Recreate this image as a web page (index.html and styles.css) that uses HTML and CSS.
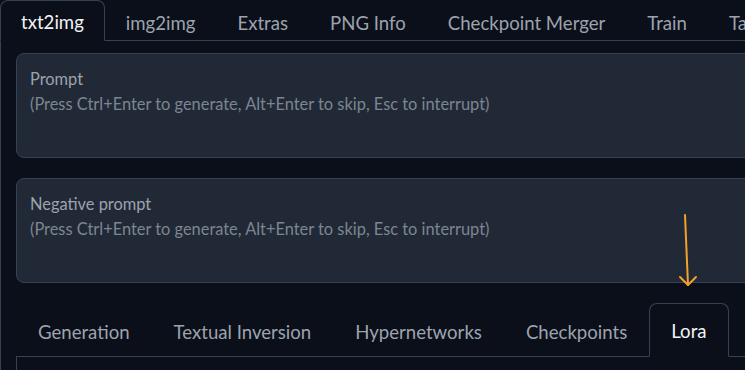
FILE: index.html
```html
<!DOCTYPE html>
<html lang="en">
<head>
  <meta charset="UTF-8">
  <title>Stable Diffusion</title>
  <link rel="stylesheet" href="styles.css">
</head>
<body>
  <div class="app">
    <div class="tab-nav">
      <button class="tab selected">txt2img</button>
      <button class="tab">img2img</button>
      <button class="tab">Extras</button>
      <button class="tab">PNG Info</button>
      <button class="tab">Checkpoint Merger</button>
      <button class="tab">Train</button>
      <button class="tab">Tags</button>
    </div>

    <div class="tab-panel">
      <div class="prompt-block">
        <label class="prompt-label">Prompt</label>
        <textarea class="prompt-input" placeholder="(Press Ctrl+Enter to generate, Alt+Enter to skip, Esc to interrupt)"></textarea>
      </div>

      <div class="prompt-block">
        <label class="prompt-label">Negative prompt</label>
        <textarea class="prompt-input" placeholder="(Press Ctrl+Enter to generate, Alt+Enter to skip, Esc to interrupt)"></textarea>
      </div>

      <div class="extra-networks">
        <div class="tab-nav sub">
          <button class="tab">Generation</button>
          <button class="tab">Textual Inversion</button>
          <button class="tab">Hypernetworks</button>
          <button class="tab">Checkpoints</button>
          <button class="tab selected">Lora</button>
        </div>
        <div class="sub-panel"></div>
      </div>
    </div>

    <!-- annotation arrow pointing at the Lora tab -->
    <svg class="pointer" width="30" height="80" viewBox="0 0 30 80">
      <path d="M11 1 L14 71" stroke="#f2a22a" stroke-width="2" fill="none" stroke-linecap="round"/>
      <path d="M6 63 L14 71 L22 63" stroke="#f2a22a" stroke-width="2" fill="none" stroke-linecap="round" stroke-linejoin="round"/>
    </svg>
  </div>
</body>
</html>
```

FILE: styles.css
```css
:root {
  --bg: #0b0f19;
  --block-bg: #212936;
  --border: #374151;
  --text: #f3f4f6;
  --text-muted: #9ca3af;
  --placeholder: #7d8592;
}

* {
  box-sizing: border-box;
  margin: 0;
  padding: 0;
}

body {
  background: var(--bg);
  font-family: 'Lato', sans-serif;
  overflow: hidden;
}

.app {
  width: 1000px;
  height: 370px;
  position: relative;
}

.tab-nav {
  display: flex;
  border-bottom: 1px solid var(--border);
}

.tab {
  background: none;
  border: 1px solid transparent;
  border-bottom: none;
  border-radius: 8px 8px 0 0;
  color: var(--text-muted);
  font-family: inherit;
  font-size: 18.6px;
  line-height: 22px;
  padding: 10px 20px 7px 20px;
  margin-bottom: -1px;
  cursor: pointer;
}

.tab.selected {
  color: var(--text);
  background: var(--bg);
  border-color: var(--border);
  border-bottom: 1px solid var(--bg);
}

.tab-panel {
  border-left: 1px solid var(--border);
  padding: 12px 0 0 15px;
  display: flex;
  flex-direction: column;
  gap: 20px;
}

.prompt-block {
  background: var(--block-bg);
  border: 1px solid var(--border);
  border-radius: 8px;
  height: 105px;
  padding: 14px 13px;
  display: flex;
  flex-direction: column;
}

.prompt-label {
  color: var(--text-muted);
  font-size: 16.4px;
  line-height: 22px;
  margin-bottom: 3px;
}

.prompt-input {
  flex: 1;
  background: none;
  border: none;
  outline: none;
  resize: none;
  font-family: inherit;
  font-size: 16.4px;
  line-height: 22px;
  color: var(--text);
}

.prompt-input::placeholder {
  color: var(--placeholder);
}

.tab-nav.sub .tab {
  padding: 16px 21px 14px 21px;
}

.sub-panel {
  border-left: 1px solid var(--border);
  height: 20px;
}

.pointer {
  position: absolute;
  left: 674px;
  top: 214px;
}
```
